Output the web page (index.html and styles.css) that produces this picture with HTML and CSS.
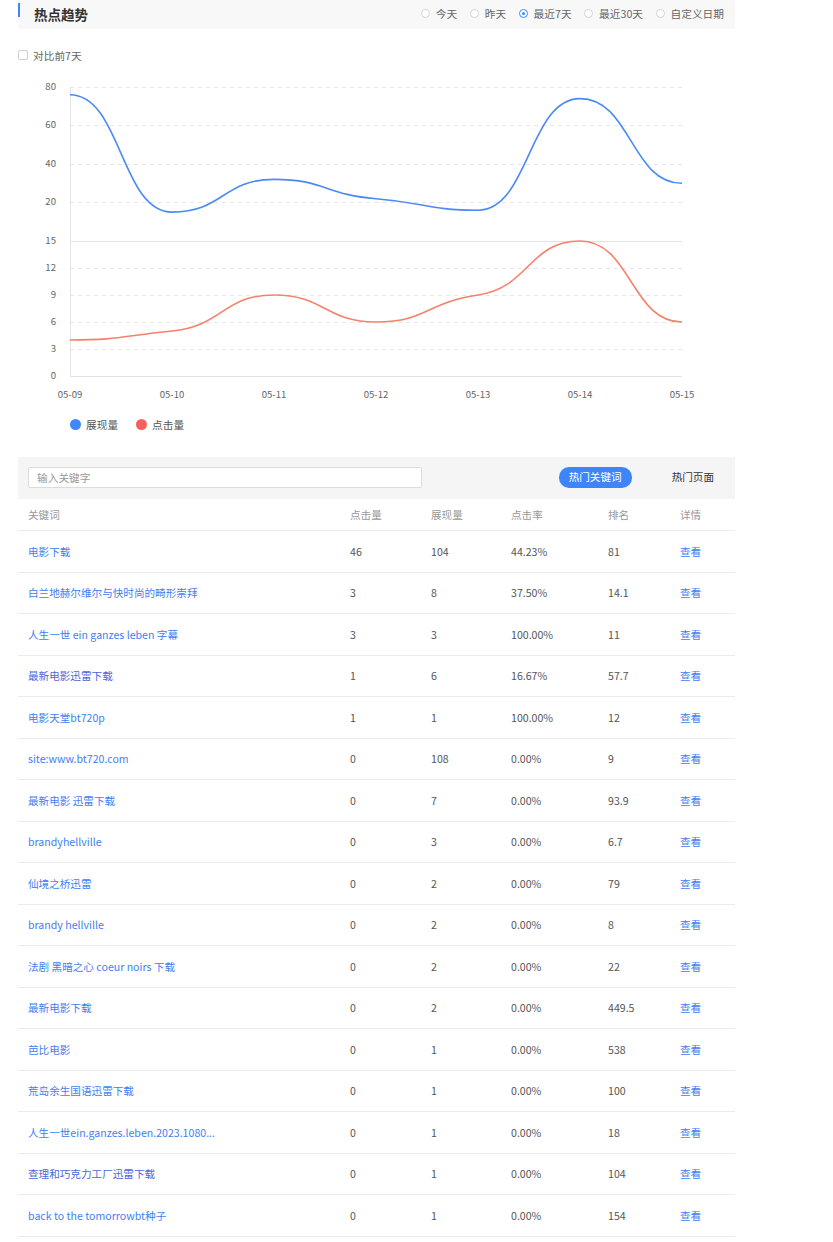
FILE: index.html
```html
<!DOCTYPE html>
<html lang="zh-CN">
<head>
<meta charset="utf-8">
<title>热点趋势</title>
<link rel="stylesheet" href="styles.css">
</head>
<body>
<div class="page">
  <div class="panel-head">
    <span class="head-bar"></span>
    <span class="head-title">热点趋势</span>
    <div class="range">
      <label class="radio"><span class="radio-dot"></span>今天</label>
      <label class="radio"><span class="radio-dot"></span>昨天</label>
      <label class="radio on"><span class="radio-dot"></span>最近7天</label>
      <label class="radio"><span class="radio-dot"></span>最近30天</label>
      <label class="radio"><span class="radio-dot"></span>自定义日期</label>
    </div>
  </div>

  <div class="compare">
    <span class="check"></span>
    <span class="compare-label">对比前7天</span>
  </div>

  <svg class="chart" width="717" height="330" viewBox="0 0 717 330">
    <g transform="translate(-18,-75)">
      <g class="grid">
        <line x1="70" x2="682" y1="87.5" y2="87.5"/>
        <line x1="70" x2="682" y1="125.5" y2="125.5"/>
        <line x1="70" x2="682" y1="164.5" y2="164.5"/>
        <line x1="70" x2="682" y1="202.5" y2="202.5"/>
        <line x1="70" x2="682" y1="268.5" y2="268.5"/>
        <line x1="70" x2="682" y1="295.5" y2="295.5"/>
        <line x1="70" x2="682" y1="322.5" y2="322.5"/>
        <line x1="70" x2="682" y1="349.5" y2="349.5"/>
      </g>
      <g class="axis">
        <line x1="70" x2="682" y1="241.5" y2="241.5"/>
        <line x1="70" x2="682" y1="376.5" y2="376.5"/>
        <line x1="70.5" x2="70.5" y1="87" y2="376"/>
      </g>
      <g class="ylab">
        <text x="56" y="87">80</text>
        <text x="56" y="125">60</text>
        <text x="56" y="164">40</text>
        <text x="56" y="202">20</text>
        <text x="56" y="241">15</text>
        <text x="56" y="268">12</text>
        <text x="56" y="295">9</text>
        <text x="56" y="322">6</text>
        <text x="56" y="349">3</text>
        <text x="56" y="376">0</text>
      </g>
      <g class="xlab">
        <text x="70" y="395">05-09</text>
        <text x="172" y="395">05-10</text>
        <text x="274" y="395">05-11</text>
        <text x="376" y="395">05-12</text>
        <text x="478" y="395">05-13</text>
        <text x="580" y="395">05-14</text>
        <text x="682" y="395">05-15</text>
      </g>
      <path class="line-blue" d="M70,94.7 C121,94.7 121,212.1 172,212.1 C223,212.1 223,179.4 274,179.4 C325,179.4 325,194.7 376,198.7 C427,202.7 427,210.2 478,210.2 C529,210.2 529,98.6 580,98.6 C631,98.6 631,183.3 682,183.3"/>
      <path class="line-red" d="M70,340 C121,340 121,336 172,331 C223,326 223,295 274,295 C325,295 325,322 376,322 C427,322 427,302 478,295 C529,288 529,241 580,241 C631,241 631,322 682,322"/>
    </g>
  </svg>

  <div class="legend">
    <span class="legend-item"><span class="legend-dot blue"></span>展现量</span>
    <span class="legend-item"><span class="legend-dot red"></span>点击量</span>
  </div>

  <div class="toolbar">
    <input class="search" type="text" placeholder="输入关键字">
    <span class="tab active">热门关键词</span>
    <span class="tab">热门页面</span>
  </div>

  <div class="table">
    <div class="tr th">
      <span class="td">关键词</span><span class="td">点击量</span><span class="td">展现量</span><span class="td">点击率</span><span class="td">排名</span><span class="td">详情</span>
    </div>
    <div class="tr"><a class="td kw">电影下载</a><span class="td">46</span><span class="td">104</span><span class="td">44.23%</span><span class="td">81</span><a class="td link">查看</a></div>
    <div class="tr"><a class="td kw">白兰地赫尔维尔与快时尚的畸形崇拜</a><span class="td">3</span><span class="td">8</span><span class="td">37.50%</span><span class="td">14.1</span><a class="td link">查看</a></div>
    <div class="tr"><a class="td kw">人生一世 ein ganzes leben 字幕</a><span class="td">3</span><span class="td">3</span><span class="td">100.00%</span><span class="td">11</span><a class="td link">查看</a></div>
    <div class="tr"><a class="td kw visited">最新电影迅雷下载</a><span class="td">1</span><span class="td">6</span><span class="td">16.67%</span><span class="td">57.7</span><a class="td link">查看</a></div>
    <div class="tr"><a class="td kw">电影天堂bt720p</a><span class="td">1</span><span class="td">1</span><span class="td">100.00%</span><span class="td">12</span><a class="td link">查看</a></div>
    <div class="tr"><a class="td kw">site:www.bt720.com</a><span class="td">0</span><span class="td">108</span><span class="td">0.00%</span><span class="td">9</span><a class="td link">查看</a></div>
    <div class="tr"><a class="td kw">最新电影 迅雷下载</a><span class="td">0</span><span class="td">7</span><span class="td">0.00%</span><span class="td">93.9</span><a class="td link">查看</a></div>
    <div class="tr"><a class="td kw">brandyhellville</a><span class="td">0</span><span class="td">3</span><span class="td">0.00%</span><span class="td">6.7</span><a class="td link">查看</a></div>
    <div class="tr"><a class="td kw">仙境之桥迅雷</a><span class="td">0</span><span class="td">2</span><span class="td">0.00%</span><span class="td">79</span><a class="td link">查看</a></div>
    <div class="tr"><a class="td kw">brandy hellville</a><span class="td">0</span><span class="td">2</span><span class="td">0.00%</span><span class="td">8</span><a class="td link">查看</a></div>
    <div class="tr"><a class="td kw">法剧 黑暗之心 coeur noirs 下载</a><span class="td">0</span><span class="td">2</span><span class="td">0.00%</span><span class="td">22</span><a class="td link">查看</a></div>
    <div class="tr"><a class="td kw">最新电影下载</a><span class="td">0</span><span class="td">2</span><span class="td">0.00%</span><span class="td">449.5</span><a class="td link">查看</a></div>
    <div class="tr"><a class="td kw">芭比电影</a><span class="td">0</span><span class="td">1</span><span class="td">0.00%</span><span class="td">538</span><a class="td link">查看</a></div>
    <div class="tr"><a class="td kw">荒岛余生国语迅雷下载</a><span class="td">0</span><span class="td">1</span><span class="td">0.00%</span><span class="td">100</span><a class="td link">查看</a></div>
    <div class="tr"><a class="td kw">人生一世ein.ganzes.leben.2023.1080...</a><span class="td">0</span><span class="td">1</span><span class="td">0.00%</span><span class="td">18</span><a class="td link">查看</a></div>
    <div class="tr"><a class="td kw visited">查理和巧克力工厂迅雷下载</a><span class="td">0</span><span class="td">1</span><span class="td">0.00%</span><span class="td">104</span><a class="td link">查看</a></div>
    <div class="tr"><a class="td kw">back to the tomorrowbt种子</a><span class="td">0</span><span class="td">1</span><span class="td">0.00%</span><span class="td">154</span><a class="td link">查看</a></div>
  </div>
</div>
</body>
</html>
```

FILE: styles.css
```css
* {
  box-sizing: border-box;
  margin: 0;
  padding: 0;
}

body {
  margin: 0;
  background: #fff;
  font-family: "Microsoft YaHei", "Noto Sans CJK SC", sans-serif;
  font-size: 10.7px;
  color: #666;
}

.page {
  width: 717px;
  margin-left: 18px;
}

/* header */
.panel-head {
  height: 29px;
  background: #f8f8f8;
  display: flex;
  align-items: center;
  padding-bottom: 2px;
}

.head-bar {
  width: 2px;
  height: 14px;
  background: #3e87fb;
  align-self: flex-start;
  margin-top: 3px;
}

.head-title {
  margin-left: 14px;
  font-size: 13.5px;
  font-weight: bold;
  color: #333;
}

.range {
  margin-left: auto;
  display: flex;
  align-items: center;
  padding-right: 11px;
}

.radio {
  display: flex;
  align-items: center;
  margin-left: 12.5px;
  color: #666;
}

.radio-dot {
  width: 9px;
  height: 9px;
  border: 1px solid #d3d3d3;
  border-radius: 50%;
  background: #fff;
  margin-right: 6px;
  display: flex;
  align-items: center;
  justify-content: center;
}

.radio.on .radio-dot {
  border-color: #3e87fb;
}

.radio.on .radio-dot::after {
  content: "";
  width: 3px;
  height: 3px;
  border-radius: 50%;
  background: #3e87fb;
}

/* compare */
.compare {
  margin-top: 18px;
  height: 16px;
  display: flex;
  align-items: center;
}

.check {
  width: 10px;
  height: 10px;
  border: 1px solid #cfcfcf;
  border-radius: 2px;
  background: #fff;
}

.compare-label {
  margin-left: 5px;
  color: #666;
}

/* chart */
.chart {
  display: block;
  margin-top: 12px;
}

.grid line {
  stroke: #e6e6e6;
  stroke-width: 1;
  stroke-dasharray: 4 4;
  shape-rendering: crispEdges;
}

.axis line {
  stroke: #e3e3e3;
  stroke-width: 1;
  shape-rendering: crispEdges;
}

.ylab text {
  font-family: "Microsoft YaHei", "Noto Sans CJK SC", sans-serif;
  font-size: 9.6px;
  fill: #666;
  text-anchor: end;
  dominant-baseline: middle;
}

.xlab text {
  font-family: "Microsoft YaHei", "Noto Sans CJK SC", sans-serif;
  font-size: 9.6px;
  fill: #666;
  text-anchor: middle;
  dominant-baseline: middle;
}

.line-blue {
  fill: none;
  stroke: #4b8af5;
  stroke-width: 1.6;
}

.line-red {
  fill: none;
  stroke: #f7806c;
  stroke-width: 1.6;
}

/* legend */
.legend {
  margin-top: 11px;
  height: 16px;
  padding-left: 52px;
  display: flex;
  align-items: center;
}

.legend-item {
  display: flex;
  align-items: center;
  color: #555;
  margin-right: 18px;
}

.legend-dot {
  width: 11px;
  height: 11px;
  border-radius: 50%;
  margin-right: 5px;
}

.legend-dot.blue { background: #3f87fc; }
.legend-dot.red { background: #f65f5e; }

/* toolbar */
.toolbar {
  margin-top: 25px;
  height: 42px;
  background: #f5f5f5;
  display: flex;
  align-items: flex-start;
  padding: 10px 21px 0 10px;
}

.search {
  width: 394px;
  height: 21px;
  border: 1px solid #dcdcdc;
  border-radius: 2px;
  background: #fff;
  padding: 0 8px;
  font-family: "Microsoft YaHei", "Noto Sans CJK SC", sans-serif;
  font-size: 10.7px;
  color: #333;
  outline: none;
}

.search::placeholder {
  color: #999;
}

.tab {
  height: 20.5px;
  line-height: 20.5px;
  font-size: 10.6px;
  color: #333;
  margin-left: 40px;
}

.tab.active {
  margin-left: auto;
  width: 73px;
  text-align: center;
  border-radius: 10px;
  background: #3e85fb;
  color: #fff;
}

/* table */
.tr {
  display: grid;
  grid-template-columns: 322px 81px 80px 97px 72px 65px;
  height: 41.5px;
  border-bottom: 1px solid #ececec;
  align-items: center;
}

.tr.th {
  height: 32px;
}

.td {
  padding-left: 10px;
  white-space: nowrap;
  color: #555;
  font-size: 10.6px;
}

.th .td {
  color: #999;
}

.kw,
.link {
  color: #3f7ef3;
  text-decoration: none;
}

.kw.visited {
  color: #4d66da;
}
```
